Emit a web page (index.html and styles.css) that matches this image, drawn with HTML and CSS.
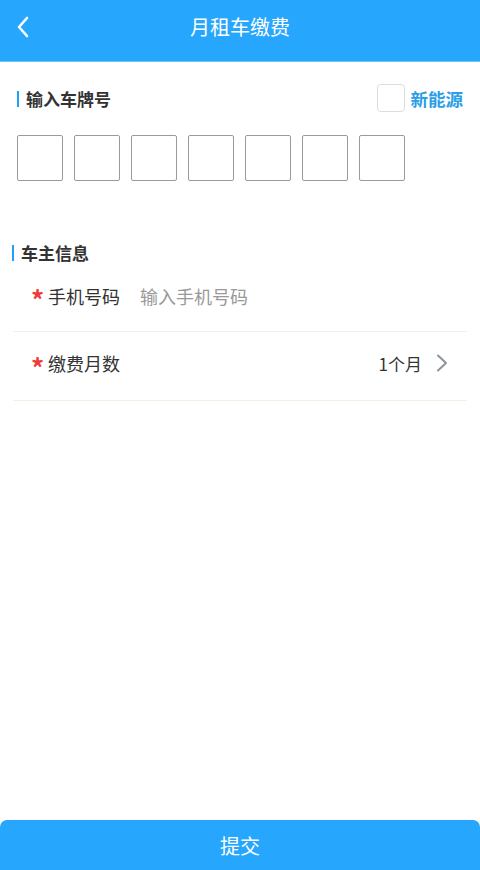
FILE: index.html
```html
<!DOCTYPE html>
<html lang="zh-CN">
<head>
<meta charset="utf-8">
<title>月租车缴费</title>
<link rel="stylesheet" href="styles.css">
</head>
<body>
<div class="page">
  <header class="topbar">
    <svg class="back" width="14" height="22" viewBox="0 0 14 22"><polyline points="11,2 3,11 11,20" fill="none" stroke="#fff" stroke-width="2.6" stroke-linecap="round" stroke-linejoin="round"/></svg>
    <h1 class="title">月租车缴费</h1>
  </header>

  <section class="plate-section">
    <div class="plate-head">
      <div class="sec-title">输入车牌号</div>
      <label class="newenergy"><span class="check"></span><span class="ne-text">新能源</span></label>
    </div>
    <div class="plates">
      <div class="plate"></div>
      <div class="plate"></div>
      <div class="plate"></div>
      <div class="plate"></div>
      <div class="plate"></div>
      <div class="plate"></div>
      <div class="plate"></div>
    </div>
  </section>

  <section class="owner-section">
    <div class="sec-title owner-title">车主信息</div>
    <div class="row row-phone">
      <span class="star">*</span><span class="label">手机号码</span><span class="placeholder">输入手机号码</span>
    </div>
    <div class="row row-months">
      <span class="star">*</span><span class="label">缴费月数</span>
      <span class="value">1个月</span>
      <svg class="chev" width="12" height="18" viewBox="0 0 12 18"><polyline points="2,1.5 10,9 2,16.5" fill="none" stroke="#8d959c" stroke-width="2" stroke-linecap="round" stroke-linejoin="round"/></svg>
    </div>
  </section>

  <div class="spacer"></div>
  <button class="submit">提交</button>
</div>
</body>
</html>
```

FILE: styles.css
```css
* { box-sizing: border-box; margin: 0; padding: 0; }
html, body { height: 100%; }
body {
  font-family: "Noto Sans CJK SC", "Noto Sans", sans-serif;
  background: #fff;
  color: #333;
}
.page {
  height: 870px;
  display: flex;
  flex-direction: column;
}
.topbar {
  height: 62px;
  background: #26a6fd;
  border-bottom: 1px solid #6cc4fb;
  display: flex;
  align-items: center;
  justify-content: center;
  position: relative;
}
.back { position: absolute; left: 16px; top: 16px; }
.title {
  font-size: 20px;
  font-weight: normal;
  color: #fff;
  line-height: 1;
  margin-top: -7px;
}
.plate-section { padding: 22px 17px 0 17px; }
.plate-head {
  display: flex;
  align-items: center;
  justify-content: space-between;
  height: 30px;
}
.sec-title {
  font-size: 17px;
  font-weight: bold;
  color: #333;
  border-left: 2px solid #1ea2f5;
  padding-left: 7px;
  line-height: 16px;
}
.newenergy { display: flex; align-items: center; gap: 6px; margin-top: -2px; }
.check {
  width: 28px; height: 28px;
  border: 1px solid #ddd;
  border-radius: 4px;
  background: #fff;
}
.ne-text { font-size: 17.5px; font-weight: bold; color: #2a9ee6; }
.plates {
  display: flex;
  gap: 11px;
  margin-top: 21px;
}
.plate {
  width: 46px; height: 46px;
  border: 1.5px solid #9a9a9a;
  border-radius: 2px;
}
.owner-section { padding: 64px 12px 0 12px; }
.owner-title { padding-left: 7px; }
.row {
  display: flex;
  align-items: center;
  margin: 0 1px;
  border-bottom: 1px solid #f3efe3;
  padding-left: 18px;
  padding-right: 19px;
}
.row-phone { height: 71px; padding-bottom: 1px; }
.row-months { height: 69px; padding-bottom: 6px; }
.star {
  color: #f03a3a;
  font-size: 26px;
  font-weight: bold;
  width: 17px;
  line-height: 1;
  margin-top: 7px;
}
.label { font-size: 18px; color: #333; }
.placeholder { font-size: 18px; color: #999; margin-left: 20px; }
.value { margin-left: auto; font-size: 17px; color: #333; }
.chev { margin-left: 14px; }
.spacer { flex: 1; }
.submit {
  height: 50px;
  background: #26a6fd;
  border: none;
  border-radius: 7px 7px 0 0;
  color: #fff;
  font-family: inherit;
  font-size: 20px;
}
```
